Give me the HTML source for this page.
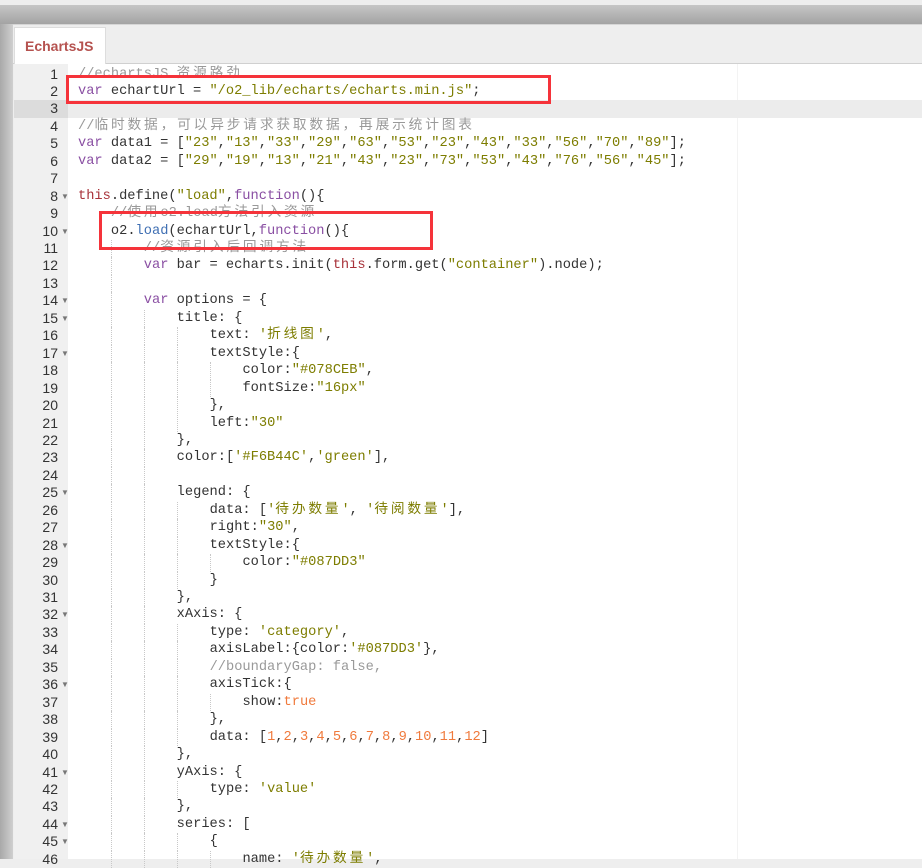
<!DOCTYPE html>
<html><head><meta charset="utf-8"><style>
*{margin:0;padding:0;box-sizing:border-box}
body{width:922px;height:859px;overflow:hidden;background:#eee;position:relative;font-family:"Liberation Sans",sans-serif}
#topbar{position:absolute;left:0;top:5px;width:922px;height:19px;background:linear-gradient(#c6c6c6,#a3a3a3);}
#leftbar{position:absolute;left:0;top:24px;width:13px;height:835px;background:linear-gradient(90deg,#a9a9a9,#cfcfcf)}
#tabs{position:absolute;left:13px;top:24px;width:909px;height:40px;background:#eee;border-top:1px solid #d6d6d6;border-bottom:1px solid #d0d0d0}
#tab{position:absolute;left:1px;top:2px;width:92px;height:38px;background:#fff;border:1px solid #ddd;border-bottom:none;color:#b5524f;font-weight:bold;font-size:14px;line-height:36px;padding-left:10px}
#gutter{position:absolute;left:14px;top:64px;width:54px;height:795px;background:#f0f0f0}
#code{position:absolute;left:68px;top:64px;width:854px;height:795px;background:#fff}
.pm{position:absolute;left:737px;top:64px;width:1px;height:795px;background:#f3f3f3}
.ln{position:absolute;left:0;width:44px;text-align:right;font:14px/17.45px "Liberation Sans",sans-serif;color:#333}
.fa{position:absolute;left:47px;font-size:8px;color:#777;line-height:17.45px}
.hl{position:absolute;height:17.45px}
.l{position:absolute;left:10px;white-space:pre;font:13.7px/17.45px "Liberation Mono","Noto Sans CJK SC",monospace;color:#333}
.i{display:inline-block;width:32.9px;height:17.45px;vertical-align:top}
.g{border-left:1px dotted #c8c8c8}
.k{color:#8a4fa3}.t{color:#a8323a}.s{color:#7d7d00}.n{color:#f07a3c}.c{color:#999}.f{color:#3f6fb3}
.z{letter-spacing:2.85px}
.box{position:absolute;border:3px solid #f5333a}
</style></head><body>
<div id="topbar"></div><div id="leftbar"></div>
<div id="tabs"><div id="tab">EchartsJS</div></div>
<div id="gutter"></div><div id="code"></div><div class="pm"></div>
<div id="lines"></div>
<div class="box" style="left:66px;top:75px;width:485px;height:29px"></div>
<div class="box" style="left:99px;top:211px;width:334px;height:39px"></div>
<script>
var L=[
[0,'<span class="c">//echartsJS <span class="z">资源路劲</span></span>'],
[0,'<span class="k">var</span> echartUrl = <span class="s">"/o2_lib/echarts/echarts.min.js"</span>;'],
[0,''],
[0,'<span class="c">//<span class="z">临时数据，可以异步请求获取数据，再展示统计图表</span></span>'],
[0,'<span class="k">var</span> data1 = [<span class="s">"23"</span>,<span class="s">"13"</span>,<span class="s">"33"</span>,<span class="s">"29"</span>,<span class="s">"63"</span>,<span class="s">"53"</span>,<span class="s">"23"</span>,<span class="s">"43"</span>,<span class="s">"33"</span>,<span class="s">"56"</span>,<span class="s">"70"</span>,<span class="s">"89"</span>];'],
[0,'<span class="k">var</span> data2 = [<span class="s">"29"</span>,<span class="s">"19"</span>,<span class="s">"13"</span>,<span class="s">"21"</span>,<span class="s">"43"</span>,<span class="s">"23"</span>,<span class="s">"73"</span>,<span class="s">"53"</span>,<span class="s">"43"</span>,<span class="s">"76"</span>,<span class="s">"56"</span>,<span class="s">"45"</span>];'],
[0,''],
[0,'<span class="t">this</span>.define(<span class="s">"load"</span>,<span class="k">function</span>(){',1],
[1,'<span class="c">//<span class="z">使用</span>o2.load<span class="z">方法引入资源</span></span>'],
[1,'o2.<span class="f">load</span>(echartUrl,<span class="k">function</span>(){',1],
[2,'<span class="c">//<span class="z">资源引入后回调方法</span></span>'],
[2,'<span class="k">var</span> bar = echarts.init(<span class="t">this</span>.form.get(<span class="s">"container"</span>).node);'],
[2,''],
[2,'<span class="k">var</span> options = {',1],
[3,'title: {',1],
[4,'text: <span class="s">\'<span class="z">折线图</span>\'</span>,'],
[4,'textStyle:{',1],
[5,'color:<span class="s">"#078CEB"</span>,'],
[5,'fontSize:<span class="s">"16px"</span>'],
[4,'},'],
[4,'left:<span class="s">"30"</span>'],
[3,'},'],
[3,'color:[<span class="s">\'#F6B44C\'</span>,<span class="s">\'green\'</span>],'],
[3,''],
[3,'legend: {',1],
[4,'data: [<span class="s">\'<span class="z">待办数量</span>\'</span>, <span class="s">\'<span class="z">待阅数量</span>\'</span>],'],
[4,'right:<span class="s">"30"</span>,'],
[4,'textStyle:{',1],
[5,'color:<span class="s">"#087DD3"</span>'],
[4,'}'],
[3,'},'],
[3,'xAxis: {',1],
[4,'type: <span class="s">\'category\'</span>,'],
[4,'axisLabel:{color:<span class="s">\'#087DD3\'</span>},'],
[4,'<span class="c">//boundaryGap: false,</span>'],
[4,'axisTick:{',1],
[5,'show:<span class="n">true</span>'],
[4,'},'],
[4,'data: [<span class="n">1</span>,<span class="n">2</span>,<span class="n">3</span>,<span class="n">4</span>,<span class="n">5</span>,<span class="n">6</span>,<span class="n">7</span>,<span class="n">8</span>,<span class="n">9</span>,<span class="n">10</span>,<span class="n">11</span>,<span class="n">12</span>]'],
[3,'},'],
[3,'yAxis: {',1],
[4,'type: <span class="s">\'value\'</span>'],
[3,'},'],
[3,'series: [',1],
[4,'{',1],
[5,'name: <span class="s">\'<span class="z">待办数量</span>\'</span>,']
];
var h='',lh=17.45,top0=65.5;
L.forEach(function(r,idx){
 var y=top0+idx*lh;
 if(idx==2){h+='<div class="hl" style="left:14px;top:'+y+'px;width:54px;background:#dcdcdc"></div><div class="hl" style="left:68px;top:'+y+'px;width:854px;background:#ececec"></div>';}
 h+='<div class="ln" style="left:14px;top:'+y+'px">'+(idx+1)+'</div>';
 if(r[2])h+='<div class="fa" style="left:61px;top:'+y+'px">&#9660;</div>';
 var ind='';for(var k=0;k<r[0];k++)ind+='<span class="i'+(k>0?' g':'')+'"></span>';
 h+='<div class="l" style="left:78px;top:'+y+'px">'+ind+r[1]+'</div>';
});
document.getElementById('lines').innerHTML=h;
</script>
</body></html>
